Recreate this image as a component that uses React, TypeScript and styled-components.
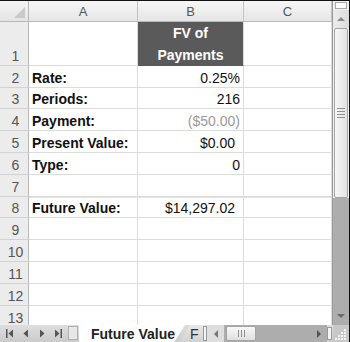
import React from 'react';
import styled, { createGlobalStyle, css } from 'styled-components';

const GlobalStyle = createGlobalStyle`
  html, body {
    margin: 0;
    padding: 0;
    background: #ffffff;
  }
  body {
    font-family: 'Liberation Sans', Arial, sans-serif;
  }
`;

const Frame = styled.div`
  width: 350px;
  height: 342px;
  box-sizing: border-box;
  border-top: 1px solid #111;
  border-right: 1px solid #111;
  display: flex;
  flex-direction: column;
  overflow: hidden;
  background: #fff;
`;

const Body = styled.div`
  display: flex;
  height: 324px;
  overflow: hidden;
`;

const Sheet = styled.div`
  display: grid;
  grid-template-columns: 29px 109px 106px 88px;
  grid-auto-rows: min-content;
  width: 332px;
  flex: none;
  align-content: start;
  overflow: hidden;
`;

const Corner = styled.div`
  height: 21px;
  box-sizing: border-box;
  background: linear-gradient(#f4f4f4, #e4e4e4);
  border-right: 1px solid #b9b9b9;
  border-bottom: 1px solid #b9b9b9;
  position: relative;
  &::after {
    content: '';
    position: absolute;
    right: 3px;
    bottom: 3px;
    width: 0;
    height: 0;
    border-left: 11px solid transparent;
    border-bottom: 11px solid #c9c9c9;
  }
`;

const ColHead = styled.div`
  height: 21px;
  box-sizing: border-box;
  display: flex;
  align-items: center;
  justify-content: center;
  background: linear-gradient(#f6f6f6, #e6e6e6);
  border-right: 1px solid #c4c4c4;
  border-bottom: 1px solid #b9b9b9;
  color: #555;
  font-size: 13px;
`;

const RowHead = styled.div<{ h: number }>`
  height: ${(p) => p.h}px;
  box-sizing: border-box;
  display: flex;
  align-items: flex-end;
  justify-content: center;
  padding: 0 0 1px 3px;
  background: #ececec;
  border-right: 1px solid #b9b9b9;
  border-bottom: 1px solid #d2d2d2;
  color: #555;
  font-size: 14px;
  line-height: 16px;
`;

const Cell = styled.div<{
  h: number;
  right?: boolean;
  bold?: boolean;
  muted?: boolean;
  pad?: number;
  dark?: boolean;
  topRule?: boolean;
}>`
  height: ${(p) => p.h}px;
  box-sizing: border-box;
  display: flex;
  align-items: flex-end;
  justify-content: ${(p) => (p.right ? 'flex-end' : 'flex-start')};
  padding: 0 ${(p) => p.pad ?? 3}px 1px 3px;
  border-right: 1px solid #dcdcdc;
  border-bottom: 1px solid #dcdcdc;
  color: ${(p) => (p.muted ? '#9a9a9a' : '#111')};
  font-size: 14px;
  line-height: 16px;
  font-weight: ${(p) => (p.bold ? 700 : 400)};
  white-space: nowrap;
  ${(p) =>
    p.topRule &&
    css`
      box-shadow: inset 0 1px 0 #e2e2e2;
    `}
  ${(p) =>
    p.dark &&
    css`
      background: #5a5a5a;
      color: #fff;
      font-weight: 700;
      justify-content: center;
      align-items: center;
      text-align: center;
      line-height: 22px;
      white-space: pre-line;
      padding: 0;
      border-bottom-color: #5a5a5a;
    `}
`;

const VScroll = styled.div`
  width: 16px;
  flex: none;
  display: flex;
  flex-direction: column;
  border-left: 1px solid #9a9a9a;
  background: #f2f2f2;
`;

const SplitBox = styled.div`
  height: 5px;
  flex: none;
  margin: 1px 2px;
  border: 1px solid #a8a8a8;
  background: #fbfbfb;
`;

const ArrowBtn = styled.div`
  height: 18px;
  flex: none;
  display: flex;
  align-items: center;
  justify-content: center;
  background: linear-gradient(90deg, #ececec, #dcdcdc);
`;

const Thumb = styled.div`
  height: 170px;
  flex: none;
  margin: 0 1px;
  box-sizing: border-box;
  border: 1px solid #a5a5a5;
  border-radius: 2px;
  background: linear-gradient(90deg, #f8f8f8, #e2e2e2);
  display: flex;
  align-items: center;
  justify-content: center;
`;

const Grip = styled.div<{ vertical?: boolean }>`
  display: flex;
  flex-direction: ${(p) => (p.vertical ? 'column' : 'row')};
  gap: 2px;
  & > span {
    display: block;
    background: #8f8f8f;
    ${(p) => (p.vertical ? 'width: 8px; height: 1px;' : 'width: 1px; height: 7px;')}
  }
`;

const Track = styled.div`
  flex: 1;
  background: #adadad;
  display: flex;
  align-items: flex-end;
  justify-content: center;
  padding-bottom: 7px;
`;

const TabBar = styled.div`
  height: 17px;
  display: flex;
  align-items: stretch;
  background: linear-gradient(#dedede, #cbcbcb);
`;

const NavGroup = styled.div`
  width: 68px;
  flex: none;
  display: flex;
  align-items: center;
  justify-content: space-around;
  padding: 0 2px;
  box-sizing: border-box;
`;

const NavBox = styled.div`
  width: 8px;
  flex: none;
  margin: 1px 1px 2px 0;
  border: 1px solid #b0b0b0;
  background: #e8e8e8;
`;

const ActiveTab = styled.div`
  width: 106px;
  flex: none;
  display: flex;
  align-items: center;
  padding-left: 12px;
  box-sizing: border-box;
  background: #fff;
  font-size: 14px;
  font-weight: 700;
  color: #222;
  clip-path: polygon(0 0, 100% 0, 90% 100%, 0 100%);
  white-space: nowrap;
  position: relative;
  z-index: 1;
`;

const OtherTab = styled.div`
  width: 24px;
  flex: none;
  margin-left: -6px;
  display: flex;
  align-items: center;
  padding-left: 11px;
  box-sizing: border-box;
  background: linear-gradient(#e8e8e8, #d2d2d2);
  font-size: 14px;
  color: #333;
  clip-path: polygon(0 100%, 45% 0, 100% 0, 100% 100%);
  overflow: hidden;
`;

const SplitBar = styled.div`
  width: 2px;
  flex: none;
  margin: 1px 0;
  border: 1px solid #9a9a9a;
  background: #f4f4f4;
`;

const HScroll = styled.div`
  width: 120px;
  flex: none;
  display: flex;
  align-items: stretch;
  background: #adadad;
`;

const HArrow = styled.div`
  width: 17px;
  display: flex;
  align-items: center;
  justify-content: center;
  background: #dedede;
`;

const HThumb = styled.div`
  width: 30px;
  margin: 1px 0 1px 2px;
  box-sizing: border-box;
  border: 1px solid #a5a5a5;
  border-radius: 2px;
  background: linear-gradient(#f8f8f8, #e0e0e0);
  display: flex;
  align-items: center;
  justify-content: center;
`;

const HTrack = styled.div`
  flex: 1;
  display: flex;
  align-items: center;
  justify-content: flex-end;
  padding-right: 6px;
`;

const EndBox = styled.div`
  width: 3px;
  flex: none;
  margin: 2px 1px 2px 0;
  border: 1px solid #9a9a9a;
  background: #f4f4f4;
`;

const Resize = styled.div`
  flex: 1;
  display: flex;
  align-items: flex-end;
  justify-content: flex-end;
  padding: 0 2px 2px 0;
  background: #c8c8c8;
`;

type Row = {
  n: number;
  h: number;
  a?: string;
  b?: string;
  muted?: boolean;
  pad?: number;
  dark?: boolean;
  topRule?: boolean;
};

const rows: Row[] = [
  { n: 1, h: 44, b: 'FV of\nPayments', dark: true },
  { n: 2, h: 22, a: 'Rate:', b: '0.25%' },
  { n: 3, h: 21, a: 'Periods:', b: '216' },
  { n: 4, h: 22, a: 'Payment:', b: '($50.00)', muted: true },
  { n: 5, h: 22, a: 'Present Value:', b: '$0.00', pad: 8 },
  { n: 6, h: 22, a: 'Type:', b: '0' },
  { n: 7, h: 22 },
  { n: 8, h: 21, a: 'Future Value:', b: '$14,297.02', pad: 8, topRule: true },
  { n: 9, h: 22 },
  { n: 10, h: 22 },
  { n: 11, h: 22 },
  { n: 12, h: 22 },
  { n: 13, h: 22 },
];

const Tri = ({ dir, size = 4, color = '#555' }: { dir: 'l' | 'r' | 'u' | 'd'; size?: number; color?: string }) => {
  const s = size;
  const pts =
    dir === 'l'
      ? `${s},0 ${s},${s * 2} 0,${s}`
      : dir === 'r'
      ? `0,0 0,${s * 2} ${s},${s}`
      : dir === 'u'
      ? `0,${s} ${s * 2},${s} ${s},0`
      : `0,0 ${s * 2},0 ${s},${s}`;
  const w = dir === 'l' || dir === 'r' ? s : s * 2;
  const h = dir === 'l' || dir === 'r' ? s * 2 : s;
  return (
    <svg width={w} height={h} viewBox={`0 0 ${w} ${h}`}>
      <polygon points={pts} fill={color} />
    </svg>
  );
};

const NavIcon = ({ kind }: { kind: 'first' | 'prev' | 'next' | 'last' }) => (
  <svg width="8" height="9" viewBox="0 0 8 9">
    {kind === 'first' && (
      <>
        <rect x="0" y="0" width="1.5" height="9" fill="#555" />
        <polygon points="7,0.5 7,8.5 2.5,4.5" fill="#555" />
      </>
    )}
    {kind === 'prev' && <polygon points="6,0.5 6,8.5 1.5,4.5" fill="#555" />}
    {kind === 'next' && <polygon points="2,0.5 2,8.5 6.5,4.5" fill="#555" />}
    {kind === 'last' && (
      <>
        <polygon points="1,0.5 1,8.5 5.5,4.5" fill="#555" />
        <rect x="6.5" y="0" width="1.5" height="9" fill="#555" />
      </>
    )}
  </svg>
);

const ResizeGrip = () => (
  <svg width="12" height="12" viewBox="0 0 12 12">
    {[
      [10, 2],
      [7, 5],
      [10, 5],
      [4, 8],
      [7, 8],
      [10, 8],
      [1, 11],
      [4, 11],
      [7, 11],
      [10, 11],
    ].map(([x, y]) => (
      <rect key={`${x}-${y}`} x={x - 1} y={y - 1} width="2" height="2" fill="#f4f4f4" />
    ))}
  </svg>
);

export default function App() {
  return (
    <>
      <GlobalStyle />
      <Frame>
        <Body>
          <Sheet>
            <Corner />
            <ColHead>A</ColHead>
            <ColHead>B</ColHead>
            <ColHead>C</ColHead>
            {rows.map((r) => (
              <React.Fragment key={r.n}>
                <RowHead h={r.h}>{r.n}</RowHead>
                <Cell h={r.h} bold topRule={r.topRule}>
                  {r.a}
                </Cell>
                <Cell h={r.h} right muted={r.muted} pad={r.pad} dark={r.dark} topRule={r.topRule}>
                  {r.b}
                </Cell>
                <Cell h={r.h} topRule={r.topRule} />
              </React.Fragment>
            ))}
          </Sheet>
          <VScroll>
            <SplitBox />
            <ArrowBtn>
              <Tri dir="u" size={4} color="#8a8a8a" />
            </ArrowBtn>
            <Thumb>
              <Grip vertical>
                <span />
                <span />
                <span />
                <span />
              </Grip>
            </Thumb>
            <Track>
              <Tri dir="d" size={4} color="#6a6a6a" />
            </Track>
          </VScroll>
        </Body>
        <TabBar>
          <NavGroup>
            <NavIcon kind="first" />
            <NavIcon kind="prev" />
            <NavIcon kind="next" />
            <NavIcon kind="last" />
          </NavGroup>
          <NavBox />
          <ActiveTab>Future Value</ActiveTab>
          <OtherTab>F</OtherTab>
          <SplitBar />
          <HScroll>
            <HArrow>
              <Tri dir="l" size={4} color="#777" />
            </HArrow>
            <HThumb>
              <Grip>
                <span />
                <span />
                <span />
              </Grip>
            </HThumb>
            <HTrack>
              <Tri dir="r" size={4} color="#555" />
            </HTrack>
          </HScroll>
          <EndBox />
          <Resize>
            <ResizeGrip />
          </Resize>
        </TabBar>
      </Frame>
    </>
  );
}
